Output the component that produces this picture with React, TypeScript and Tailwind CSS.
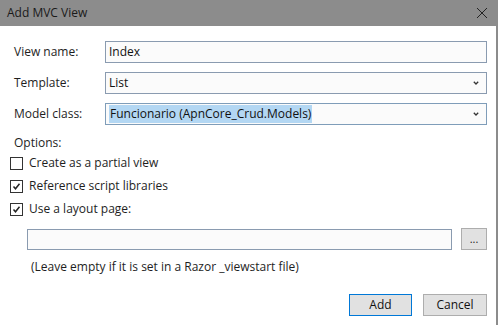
import React from "react";

const font = { fontFamily: '"Open Sans", "Noto Sans", sans-serif' };

const Chevron = () => (
  <svg width="6" height="4" viewBox="0 0 6 4" className="shrink-0">
    <path d="M0.8 0.8 L3 3 L5.2 0.8" fill="none" stroke="#333" strokeWidth="1.3" />
  </svg>
);

const Check = ({ checked }: { checked?: boolean }) => (
  <div className="w-[13px] h-[13px] border border-[#333] bg-white flex items-center justify-center shrink-0">
    {checked && (
      <svg width="9" height="9" viewBox="0 0 9 9">
        <path d="M1.5 4.5 L3.5 6.8 L7.5 1.8" fill="none" stroke="#222" strokeWidth="1.5" />
      </svg>
    )}
  </div>
);

const Field = ({
  label,
  children,
  select,
  height = "h-[22px]",
  highlight,
}: {
  label: string;
  children?: React.ReactNode;
  select?: boolean;
  height?: string;
  highlight?: boolean;
}) => (
  <div className="flex items-center">
    <div className="w-[91px] text-[12px] text-[#1e1e1e]">{label}</div>
    <div
      className={`flex-1 ${height} border ${
        highlight ? "border-[#7f9db9]" : "border-[#8a9bb0]"
      } bg-[#fbfbfb] flex items-center justify-between pl-[3px] pr-[7px] text-[12px] text-[#111]`}
    >
      <span className={highlight ? "bg-[#b3d7f3] px-[1px]" : ""}>{children}</span>
      {select && <Chevron />}
    </div>
  </div>
);

export default function App() {
  return (
    <div className="w-[499px] h-[325px] bg-white flex overflow-hidden" style={font}>
      <div className="w-[496px] flex flex-col">
        <div className="h-[26px] bg-[#8c8c8c] flex items-center justify-between pl-[7px] pr-[8px]">
          <span className="text-[12px] text-[#1a1a1a]">Add MVC View</span>
          <svg width="12" height="12" viewBox="0 0 12 12">
            <path d="M1 1 L11 11 M11 1 L1 11" stroke="#222" strokeWidth="1" />
          </svg>
        </div>
        <div className="flex flex-col pl-[14px] pr-[9px] pt-[15px]">
          <Field label="View name:">Index</Field>
          <div className="h-[9px]" />
          <Field label="Template:" select height="h-[22px]">
            List
          </Field>
          <div className="h-[9px]" />
          <Field label="Model class:" select highlight>
            Funcionario (ApnCore_Crud.Models)
          </Field>
        </div>
        <div className="pl-[14px] mt-[9px] text-[12px] text-[#1e1e1e] leading-[18px]">Options:</div>
        <div className="flex flex-col pl-[10px] mt-[4px] gap-[9px] text-[12px] text-[#1e1e1e]">
          <div className="flex items-center gap-[6px] h-[14px]">
            <Check />
            <span>Create as a partial view</span>
          </div>
          <div className="flex items-center gap-[6px] h-[14px]">
            <Check checked />
            <span>Reference script libraries</span>
          </div>
          <div className="flex items-center gap-[6px] h-[14px]">
            <Check checked />
            <span>Use a layout page:</span>
          </div>
        </div>
        <div className="flex items-center pl-[27px] pr-[9px] mt-[12px]">
          <div className="flex-1 h-[21px] border border-[#8a9bb0] bg-[#fbfbfb]" />
          <div className="ml-[9px] w-[26px] h-[22px] border border-[#adadad] bg-[#e1e1e1] flex items-center justify-center text-[11px] leading-none text-[#222] pb-[2px]">
            ...
          </div>
        </div>
        <div className="pl-[31px] mt-[8px] text-[12px] text-[#1e1e1e]">
          (Leave empty if it is set in a Razor _viewstart file)
        </div>
        <div className="flex justify-end gap-[11px] pr-[9px] mt-[18px]">
          <button className="w-[63px] h-[22px] border border-[#0078d7] bg-[#e1e1e1] text-[12px] text-[#111]">
            Add
          </button>
          <button className="w-[64px] h-[22px] border border-[#adadad] bg-[#e1e1e1] text-[12px] text-[#111]">
            Cancel
          </button>
        </div>
      </div>
      <div className="w-[2px] bg-[#8c8c8c]" />
      <div className="w-[1px] bg-white" />
    </div>
  );
}
